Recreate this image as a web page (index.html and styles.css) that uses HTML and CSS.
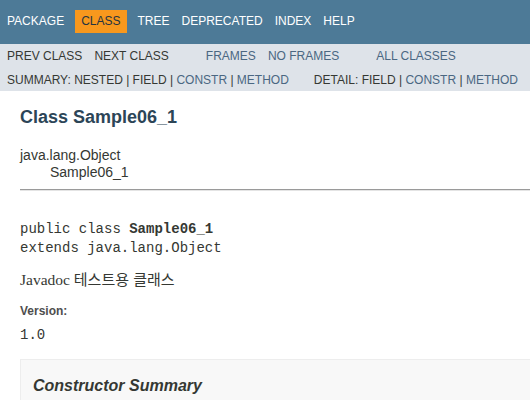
FILE: index.html
```html
<!DOCTYPE html>
<html lang="ko">
<head>
<meta charset="utf-8">
<title>Sample06_1</title>
<link rel="stylesheet" href="styles.css">
</head>
<body>
<div class="topNav">
  <ul class="navList">
    <li>Package</li>
    <li class="navBarCell1Rev">Class</li>
    <li>Tree</li>
    <li>Deprecated</li>
    <li>Index</li>
    <li>Help</li>
  </ul>
</div>
<div class="subNav">
  <div class="subRow">
    <ul class="navList">
      <li>Prev Class</li>
      <li>Next Class</li>
    </ul>
    <ul class="navList">
      <li class="link">Frames</li>
      <li class="link">No Frames</li>
    </ul>
    <ul class="navList">
      <li class="link">All Classes</li>
    </ul>
  </div>
  <div class="subRow2">
    <ul class="subNavList"><li>Summary:&nbsp;</li><li>Nested&nbsp;|&nbsp;</li><li>Field&nbsp;|&nbsp;</li><li><span class="link">Constr</span>&nbsp;|&nbsp;</li><li><span class="link">Method</span></li></ul>
    <ul class="subNavList"><li>Detail:&nbsp;</li><li>Field&nbsp;|&nbsp;</li><li><span class="link">Constr</span>&nbsp;|&nbsp;</li><li><span class="link">Method</span></li></ul>
  </div>
</div>
<div class="header">
  <h2 class="title">Class Sample06_1</h2>
</div>
<div class="contentContainer">
  <ul class="inheritance">
    <li>java.lang.Object</li>
    <li class="inner">Sample06_1</li>
  </ul>
  <div class="description">
    <hr class="rule">
    <pre class="decl">public class <b>Sample06_1</b>
extends java.lang.Object</pre>
    <div class="block">Javadoc <span class="ko">테스트용 클래스</span></div>
    <dl class="tags">
      <dt>Version:</dt>
      <dd>1.0</dd>
    </dl>
  </div>
  <div class="summaryBox">
    <h3 class="summaryTitle">Constructor Summary</h3>
  </div>
</div>
</body>
</html>
```
FILE: styles.css
```css
html, body {
  overflow: hidden;
}
body {
  margin: 0;
  background: #ffffff;
  color: #353833;
  font-family: "Liberation Sans", Arial, sans-serif;
  font-size: 14px;
}
ul {
  list-style: none;
  margin: 0;
  padding: 0;
}
.topNav {
  background: #4D7A97;
  color: #ffffff;
  height: 44px;
  box-sizing: border-box;
  padding: 10px 0 0 1px;
  font-size: 12px;
}
.navList {
  display: flex;
  margin-right: 25px;
}
.navList li {
  padding: 5px 6px;
  line-height: 13px;
  text-transform: uppercase;
}
.topNav .navList li.navBarCell1Rev {
  background: #F8981D;
  color: #253441;
  margin: 0 5px;
}
.subNav {
  background: #dee3e9;
  font-size: 12px;
  padding-left: 1px;
  height: 47px;
}
.subRow {
  display: flex;
  height: 24px;
}
.subRow .navList li {
  line-height: 14px;
}
.link {
  color: #4A6782;
}
.subRow2 {
  display: flex;
  padding: 5px 0 0 6px;
  line-height: 14px;
  text-transform: uppercase;
}
.subNavList {
  margin-right: 25px;
  white-space: nowrap;
}
.subNavList li {
  display: inline;
}
.header {
  padding: 0 20px;
}
.title {
  color: #2c4557;
  font-size: 18px;
  font-weight: bold;
  line-height: 21px;
  margin: 16px 0 9px;
}
.contentContainer {
  padding: 10px 0 10px 20px;
}
.inheritance li {
  line-height: 16px;
}
.inheritance li.inner {
  padding: 1px 0 0 30px;
}
.rule {
  margin: 9px 0 0;
  border: 0;
  border-top: 1px solid #9a9a9a;
  border-bottom: 1px solid #e4e4e4;
  height: 0;
}
.decl {
  margin: 29px 0 11px;
  font-family: "Liberation Mono", "Courier New", monospace;
  font-size: 14px;
  line-height: 19px;
  color: #353833;
}
.block {
  font-family: "Liberation Serif", "Times New Roman", serif;
  font-size: 15.5px;
  line-height: 20px;
}
.ko {
  font-family: "Noto Sans CJK KR", sans-serif;
  font-size: 15px;
}
.tags {
  margin: 14px 0 0;
}
.tags dt {
  font-size: 12px;
  font-weight: bold;
  color: #4E4E4E;
  line-height: 14px;
}
.tags dd {
  margin: 9px 0 0;
  font-family: "Liberation Mono", "Courier New", monospace;
  font-size: 14px;
  line-height: 16px;
}
.summaryBox {
  margin: 16px -20px 0 0;
  border: 1px solid #ededed;
  background: #f8f8f8;
  padding: 16px 0 20px 12px;
}
.summaryTitle {
  margin: 0;
  font-size: 16px;
  font-style: italic;
  font-weight: bold;
  line-height: 19px;
  color: #353833;
}
```
